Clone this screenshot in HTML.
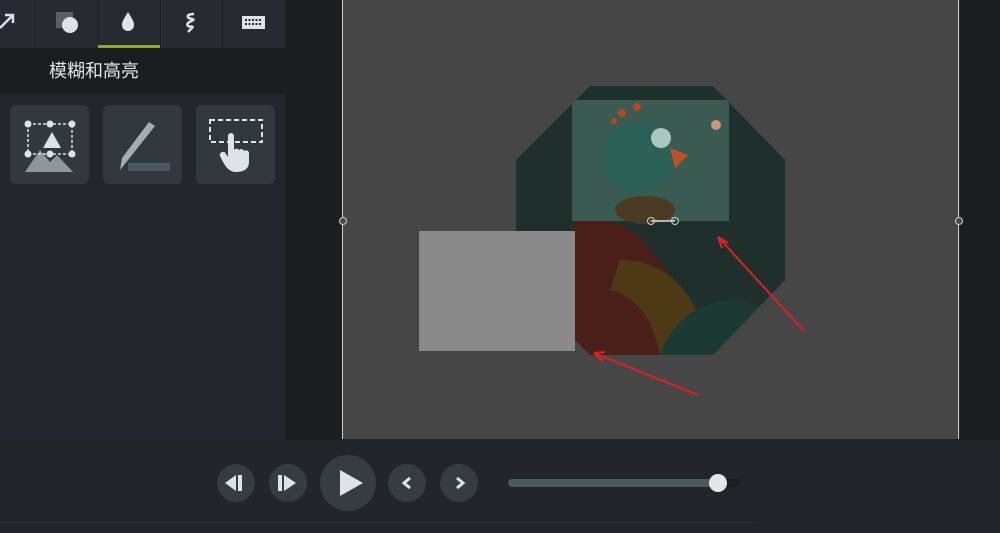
<!DOCTYPE html><html><head><meta charset="utf-8"><style>
body{margin:0;width:1000px;height:533px;overflow:hidden;background:#22262b;position:relative;font-family:"Liberation Sans","Noto Sans CJK SC",sans-serif}
div{position:absolute;box-sizing:border-box}
.btn{top:105px;width:79px;height:79px;background:#33383f;border-radius:6px}
.c{border-radius:50%;background:#363c42}
</style></head><body>
<div style="left:0;top:0;width:285px;height:440px;background:#23272d"></div>
<div style="left:285px;top:0;width:57px;height:440px;background:#1b1e21"></div>
<div style="left:342px;top:0;width:617px;height:439px;background:#464646;border-left:1px solid #ccc;border-right:1px solid #ccc"></div>
<div style="left:960px;top:0;width:40px;height:440px;background:#1b1e21"></div>
<div style="left:0;top:0;width:285px;height:48px;background:#272b31"></div>
<div style="left:35px;top:0;width:1px;height:48px;background:#1d2024"></div>
<div style="left:98px;top:0;width:1px;height:48px;background:#1d2024"></div>
<div style="left:160px;top:0;width:1px;height:48px;background:#1d2024"></div>
<div style="left:222px;top:0;width:1px;height:48px;background:#1d2024"></div>
<div style="left:98px;top:45px;width:62px;height:3px;background:#8aaa2e"></div>
<div style="left:0;top:48px;width:285px;height:46px;background:#1a1d20"></div>
<div style="left:49px;top:58px;color:#e4e6e8;font-size:18px;line-height:26px">模糊和高亮</div>
<svg style="position:absolute;left:0;top:0" width="285" height="48">
<path d="M0 28 L12 16 M5 15 H13 V23" stroke="#dde" stroke-width="2.5" fill="none"/>
<rect x="56" y="12" width="17" height="16" fill="#5a6166"/><circle cx="70" cy="25" r="8" fill="#dfe2e6"/>
<path d="M128 12 C124 19 122 21 122 25 A6 6 0 0 0 134 25 C134 21 132 19 128 12Z" fill="#dfe2e6"/>
<path d="M194 14 C186 14 186 18 192 19 C198 20 184 22 188 26 C192 28 196 24 188 32" stroke="#dfe2e6" stroke-width="2.5" fill="none"/>
<rect x="242" y="16" width="23" height="13" fill="#dfe2e6"/><path d="M245 20h17M245 24h17" stroke="#272b31" stroke-width="2" stroke-dasharray="2 1.5"/>
</svg>
<div class="btn" style="left:10px"></div><div class="btn" style="left:103px"></div><div class="btn" style="left:196px"></div>
<svg style="position:absolute;left:0;top:100px" width="285" height="90">
<path d="M25 72 L40 50 L50 62 L57 55 L73 72Z" fill="#8f979c"/><path d="M43 48 L52 32 L61 48Z" fill="#dfe2e6"/>
<rect x="28" y="24" width="44" height="30" fill="none" stroke="#dfe2e6" stroke-width="1.5" stroke-dasharray="3 2"/>
<g fill="#dfe2e6"><circle cx="28" cy="24" r="3.5"/><circle cx="50" cy="24" r="3.5"/><circle cx="72" cy="24" r="3.5"/><circle cx="28" cy="54" r="3.5"/><circle cx="50" cy="54" r="3.5"/><circle cx="72" cy="54" r="3.5"/></g>
<rect x="128" y="63" width="42" height="8" fill="#48585d"/>
<path d="M149 22 L155 26 L128 60 L120 70 L122 58Z" fill="#a6adb2"/>
<rect x="210" y="20" width="52" height="22" fill="none" stroke="#dfe2e6" stroke-width="2" stroke-dasharray="5 3"/>
<path d="M228 36 a3 3 0 0 1 6 0 V50 a3 3 0 0 1 5 0 a3 3 0 0 1 5 1 a3 3 0 0 1 5 2 V62 C249 70 242 72 236 72 C230 72 226 68 222 60 L220 56 a3 3 0 0 1 6 -2 L228 57Z" fill="#dfe2e6"/>
</svg>
<svg style="position:absolute;left:0;top:0" width="1000" height="440">
<defs><clipPath id="oc"><path d="M590 86 L713 86 L785 160 L785 280 L713 355 L590 355 L516 280 L516 160Z"/></clipPath></defs>
<g clip-path="url(#oc)">
<rect x="516" y="86" width="270" height="270" fill="#1f302c"/>
<rect x="572" y="100" width="157" height="121" fill="#3a5a52"/>
<rect x="516" y="231" width="59" height="85" fill="#3b5a52"/>
<path d="M575 221 L610 221 Q650 230 680 300 L700 355 L570 355Z" fill="#4a1f1a"/>
<path d="M620 260 Q690 260 712 355 L660 355 Q650 300 610 290Z" fill="#4d3a14"/>
<path d="M660 355 Q680 300 740 300 L785 315 L785 355Z" fill="#1a3a33"/>
</g>
<ellipse cx="637" cy="158" rx="36" ry="36" fill="#2c6157"/>
<ellipse cx="645" cy="210" rx="30" ry="14" fill="#4a3a22"/>
<ellipse cx="661" cy="138" rx="10" ry="10" fill="#aac7c0"/><path d="M670 148 L688 155 L675 168Z" fill="#c0502a"/>
<circle cx="622" cy="113" r="4" fill="#b34a1c"/><circle cx="637" cy="107" r="4" fill="#b34a1c"/><circle cx="614" cy="121" r="3" fill="#b34a1c"/>
<circle cx="716" cy="125" r="5" fill="#c9977a"/>
<rect x="419" y="231" width="156" height="120" fill="#8a8a8a"/>
<path d="M651 221 H675" stroke="#ddd" stroke-width="1.5"/><circle cx="651" cy="221" r="3.5" fill="none" stroke="#ccc"/><circle cx="675" cy="221" r="3.5" fill="none" stroke="#ccc"/>
<circle cx="343" cy="221" r="3.5" fill="#464646" stroke="#ccc"/><circle cx="959" cy="221" r="3.5" fill="#464646" stroke="#ccc"/>
<path d="M804 331 L718 237 M718 237 L722 248 M718 237 L728 243" stroke="#e02020" stroke-width="2" fill="none"/>
<path d="M698 395 L594 353 M594 353 L603 361 M594 353 L605 352" stroke="#e02020" stroke-width="2" fill="none"/>
</svg>
<div style="left:0;top:440px;width:1000px;height:93px;background:#22262b"></div>
<div style="left:0;top:522px;width:755px;height:1px;background:#2e3338"></div>
<div class="c" style="left:217px;top:464px;width:38px;height:38px"></div>
<div class="c" style="left:269px;top:464px;width:38px;height:38px"></div>
<div class="c" style="left:320px;top:455px;width:56px;height:56px"></div>
<div class="c" style="left:388px;top:464px;width:38px;height:38px"></div>
<div class="c" style="left:440px;top:464px;width:38px;height:38px"></div>
<div style="left:508px;top:479px;width:232px;height:8px;background:#1a1d21;border-radius:4px"></div>
<div style="left:508px;top:479px;width:212px;height:8px;background:#4a5a60;border-radius:4px"></div>
<div style="left:709px;top:474px;width:18px;height:18px;border-radius:50%;background:#e4e6ea"></div>
<svg style="position:absolute;left:0;top:440px" width="500" height="93">
<g fill="#dfe2e6"><path d="M225 43 L236 35 V51Z"/><rect x="238" y="35" width="4" height="16"/>
<rect x="278" y="35" width="4" height="16"/><path d="M284 35 L296 43 L284 51Z"/>
<path d="M340 30 L363 43 L340 56Z"/></g>
<path d="M410 38 L404 43 L410 48 M457 38 L463 43 L457 48" stroke="#dfe2e6" stroke-width="3" fill="none"/>
</svg>
</body></html>
